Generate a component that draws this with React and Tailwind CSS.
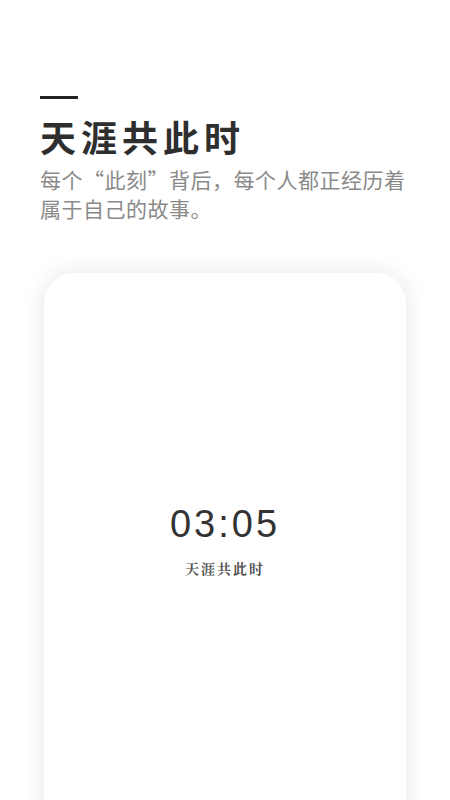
import React from "react";

function Card() {
  return (
    <div className="mx-[44px] mt-[50px] h-[560px] rounded-t-[30px] bg-white shadow-[0_0_24px_rgba(0,0,0,0.1)] flex flex-col items-center pt-[232px]">
      <div className="text-[38px] font-light leading-none tracking-[3px] text-[#333]" style={{ fontFamily: '"Liberation Sans", Arial, sans-serif' }}>
        03:05
      </div>
      <div className="mt-[15px] text-[14px] font-bold tracking-[2px] text-[#555]" style={{ fontFamily: '"Noto Serif CJK SC", "Noto Sans CJK SC", serif' }}>
        天涯共此时
      </div>
    </div>
  );
}

export default function App() {
  return (
    <div className="w-[450px] h-[800px] overflow-hidden bg-white" style={{ fontFamily: '"Noto Sans CJK SC", "Noto Sans", sans-serif' }}>
      <div className="px-[40px] pt-[96px]">
        <div className="w-[38px] h-[3px] bg-[#222]" />
        <h1 className="mt-[15px] text-[36px] font-semibold leading-[44px] tracking-[5px] text-[#2e2e2e]">天涯共此时</h1>
        <p className="mt-[7px] text-[21px] leading-[29px] tracking-[0.5px] text-[#8a8a8a]">
          每个“此刻”背后，每个人都正经历着
          <br />
          属于自己的故事。
        </p>
      </div>
      <Card />
    </div>
  );
}
